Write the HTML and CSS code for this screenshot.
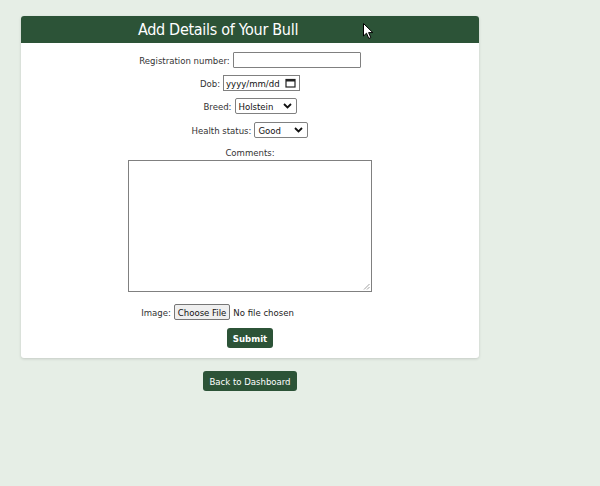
FILE: index.html
```html
<!DOCTYPE html>
<html>
<head>
<meta charset="utf-8">
<link rel="stylesheet" href="styles.css">
</head>
<body>
<div class="wrap">
  <div class="card">
    <h1 class="title">Add Details of Your Bull</h1>
    <form class="form">
      <div class="row"><label>Registration number:</label><input class="text" type="text"></div>
      <div class="row"><label>Dob:</label><span class="date">yyyy/mm/dd<svg width="11" height="10" viewBox="0 0 11 10"><rect x="1" y="1.5" width="9" height="7.5" fill="none" stroke="#222" stroke-width="1.2"/><rect x="1" y="1.5" width="9" height="2" fill="#222"/></svg></span></div>
      <div class="row row-breed"><label>Breed:</label><span class="select sel-breed">Holstein<svg class="chev" width="9" height="6" viewBox="0 0 9 6"><path d="M1 1l3.5 3.5L8 1" fill="none" stroke="#111" stroke-width="1.8"/></svg></span></div>
      <div class="row"><label>Health status:</label><span class="select sel-health">Good<svg class="chev" width="9" height="6" viewBox="0 0 9 6"><path d="M1 1l3.5 3.5L8 1" fill="none" stroke="#111" stroke-width="1.8"/></svg></span></div>
      <div class="col"><label>Comments:</label><span class="area"><svg class="grip" width="7" height="7" viewBox="0 0 7 7"><path d="M1 6.5L6.5 1M4 6.5L6.5 4" stroke="#888" stroke-width="0.8"/></svg></span></div>
      <div class="row img-row"><label>Image:</label><span class="file"><span class="filebtn">Choose File</span><span class="nofile">No file chosen</span></span></div>
      <div class="row"><button type="button" class="btn">Submit</button></div>
    </form>
  </div>
  <div class="back"><button type="button" class="btn btn-back">Back to Dashboard</button></div>
</div>
<svg class="cursor" width="12" height="17" viewBox="0 0 12 17"><path d="M0.5 0.5L0.5 13L3.5 10.2L5.8 15.5L7.8 14.6L5.6 9.6L9.8 9.6Z" fill="#fff" stroke="#000" stroke-width="1" stroke-linejoin="round"/></svg>
</body>
</html>
```
FILE: styles.css
```css
* { box-sizing: border-box; }
html, body { margin: 0; padding: 0; }
body {
  position: relative;
  background: #e6eee6;
  width: 600px;
  height: 486px;
  font-family: "DejaVu Sans Condensed", "DejaVu Sans", sans-serif;
  font-size: 9.5px;
  color: #333;
}
.wrap {
  width: 458px;
  margin: 16px 0 0 21px;
}
.card {
  background: #fff;
  border-radius: 3px;
  box-shadow: 0 1px 3px rgba(0,0,0,0.15);
  overflow: hidden;
  padding-bottom: 8px;
}
.title {
  margin: 0;
  height: 27px;
  line-height: 27px;
  background: #2c5337;
  color: #fff;
  text-align: center;
  font-weight: normal;
  font-size: 16px;
  letter-spacing: -0.3px;
  padding-right: 64px;
}
.form {
  padding-top: 9px;
  display: flex;
  flex-direction: column;
  align-items: center;
}
.row {
  display: flex;
  align-items: center;
  justify-content: center;
  height: 16px;
  margin-bottom: 7px;
}
.row-breed { margin-bottom: 8px; }
.row label { margin-right: 3px; }
.text {
  width: 128px;
  height: 16px;
  border: 1px solid #808080;
  border-radius: 1px;
  padding: 0;
  margin: 0;
}
.date {
  display: inline-flex;
  align-items: center;
  justify-content: space-between;
  width: 77px;
  height: 16px;
  border: 1px solid #808080;
  padding: 0 3px 0 2px;
  color: #111;
  font-size: 9.5px;
}
.select {
  display: inline-flex;
  align-items: center;
  justify-content: space-between;
  height: 16px;
  border: 1px solid #808080;
  border-radius: 2px;
  padding: 0 4px 0 3px;
  color: #111;
}
.sel-breed { width: 62px; }
.sel-health { width: 54px; }
.col {
  display: flex;
  flex-direction: column;
  align-items: center;
  margin-top: 2px;
  margin-bottom: 12px;
}
.col label { line-height: 12px; margin-bottom: 1px; }
.area {
  position: relative;
  display: block;
  width: 244px;
  height: 132px;
  border: 1px solid #808080;
}
.grip { position: absolute; right: 1px; bottom: 1px; }
.img-row { margin-bottom: 7px; }
.file {
  display: inline-flex;
  align-items: center;
  width: 185px;
}
.filebtn {
  display: inline-flex;
  align-items: center;
  height: 16px;
  padding: 0 3px;
  background: #efefef;
  border: 1px solid #767676;
  border-radius: 2px;
  color: #111;
  margin-right: 3px;
}
.nofile { color: #222; }
.btn {
  font-family: inherit;
  background: #2c5337;
  color: #fff;
  border: 0;
  border-radius: 3px;
  font-size: 9.5px;
  font-weight: bold;
  height: 20px;
  padding: 0 6px;
  margin: 0;
}
.row .btn { margin-top: 6px; }
.back {
  display: flex;
  justify-content: center;
  margin-top: 13px;
}
.btn-back { font-weight: normal; padding: 0 6px; }
.cursor {
  position: absolute;
  left: 363px;
  top: 23px;
}
```
